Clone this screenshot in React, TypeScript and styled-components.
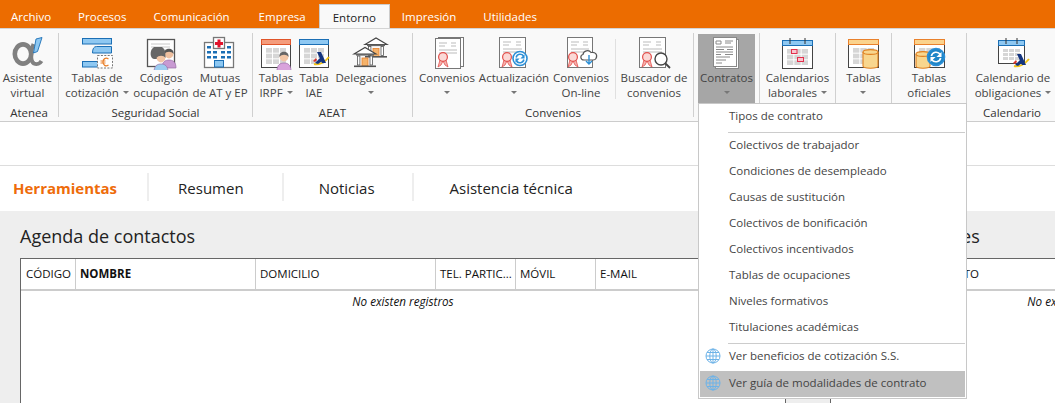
import { ReactNode } from 'react';
import styled, { createGlobalStyle } from 'styled-components';

const FONT = `"Open Sans", "Noto Sans", "Liberation Sans", sans-serif`;

const BLUE = '#1b6fb5';
const SKY = '#8ec8f2';
const ORANGE = '#e9812c';

/* svg pieces shared by the ribbon icons, canvas is 40x34 */
function Seal({ x, y }: { x: number; y: number }) {
  return (
    <g>
      <path d={`M${x - 3} ${y + 3}l-2 7 3-2 2-4 2 4 3 2-2-7z`} fill="#f6b4b0" stroke="#e2504c" strokeWidth="0.8" />
      <circle cx={x} cy={y} r="4.4" fill="#fbd9d6" stroke="#e2504c" strokeWidth="1.2" />
    </g>
  );
}

function Doc({ x, w = 26 }: { x: number; w?: number }) {
  return (
    <g>
      <rect x={x + 0.5} y="1.5" width={w} height="30" fill="#fff" stroke="#777" />
      <path
        d={`M${x + 4} 6h8M${x + 4} 9h6M${x + w - 9} 6h5M${x + w - 9} 9h5M${x + 4} 13h${w - 7}M${x + 4} 16h${w - 7}`}
        stroke="#bbb"
        fill="none"
      />
    </g>
  );
}

function Refresh({ x, y, r, dark }: { x: number; y: number; r: number; dark?: boolean }) {
  const c = dark ? '#1f86c8' : '#fff';
  const s = dark ? '#fff' : '#2c8fd6';
  return (
    <g>
      <circle cx={x} cy={y} r={r} fill={c} stroke="#2c8fd6" strokeWidth="1.6" />
      <path
        d={`M${x - r * 0.55} ${y - 1}a${r * 0.58} ${r * 0.58} 0 0 1 ${r * 1.05} -1.5M${x + r * 0.55} ${y + 1}a${r * 0.58} ${r * 0.58} 0 0 1 ${-r * 1.05} 1.5`}
        fill="none"
        stroke={s}
        strokeWidth="1.6"
      />
      <path
        d={`M${x + r * 0.65} ${y - r * 0.6}v${r * 0.6}h${-r * 0.6}zM${x - r * 0.65} ${y + r * 0.6}v${-r * 0.6}h${r * 0.6}z`}
        fill={s}
      />
    </g>
  );
}

function Table({ x, w, y = 3, h, top, edge, rings }: { x: number; w: number; y?: number; h: number; top: string; edge: string; rings?: boolean }) {
  const cells = [];
  for (let r = 0; r < 3; r++) {
    for (let c = 0; c < 3; c++) {
      cells.push(
        <rect
          key={`${r}-${c}`}
          x={x + 5 + (c * (w - 8)) / 3}
          y={y + 9 + (r * (h - 11)) / 3}
          width={(w - 8) / 3 - 1}
          height={(h - 11) / 3 - 1}
          fill="#d6d6d6"
        />
      );
    }
  }
  return (
    <g>
      <rect x={x + 0.5} y={y + 0.5} width={w} height={h} fill="#fff" stroke="#444" />
      <rect x={x + 0.5} y={y + 0.5} width={w} height="5" fill={top} stroke={edge} />
      {cells}
      {rings && <path d={`M${x + 8} ${y - 2}v6M${x + w - 7} ${y - 2}v6`} stroke="#333" />}
    </g>
  );
}

function Cylinder({ x, y, w, h }: { x: number; y: number; w: number; h: number }) {
  return (
    <g fill="#f8d68e" stroke="#e08020" strokeWidth="1.1">
      <path d={`M${x} ${y + 2}v${h - 4}c0 3 ${w} 3 ${w} 0v${-(h - 4)}`} />
      <ellipse cx={x + w / 2} cy={y + 2} rx={w / 2} ry="2.4" />
    </g>
  );
}

function Person({ x, y, skin, shirt, hair }: { x: number; y: number; skin: string; shirt: string; hair: string }) {
  return (
    <g>
      <path d={`M${x - 7} ${y + 14}c0-6 3-8 7-8s7 2 7 8z`} fill={shirt} stroke="#9a6fa8" strokeWidth="0.7" />
      <circle cx={x} cy={y} r="4.4" fill={skin} />
      <path d={`M${x - 4.6} ${y}c-1-7 10-7 9.2 0-2-3-7-3-9.2 0z`} fill={hair} />
    </g>
  );
}

function Aeat({ x, y }: { x: number; y: number }) {
  return (
    <g>
      <path d={`M${x - 7} ${y + 4}c5 1 11-2 15-7`} fill="none" stroke="#f2c417" strokeWidth="2" />
      <path d={`M${x - 4} ${y - 8}h4l5 11h-4zM${x - 6} ${y + 3}l5-5 2 3-4 3z`} fill="#14357f" />
      <path d={`M${x - 8} ${y + 1}l3 -3 1 2-2 2z`} fill="#d8342c" />
    </g>
  );
}

function Bank({ x, y }: { x: number; y: number }) {
  return (
    <g>
      <path d={`M${x} ${y + 7}l11-6.5 11 6.5z`} fill="#fff" stroke="#444" strokeWidth="1.1" />
      <rect x={x + 2} y={y + 7} width="18" height="1.6" fill="#666" />
      <rect x={x + 3.5} y={y + 9} width="2.4" height="9" fill="#fff" stroke="#555" strokeWidth="0.8" />
      <rect x={x + 16} y={y + 9} width="2.4" height="9" fill="#fff" stroke="#555" strokeWidth="0.8" />
      <rect x={x + 8} y={y + 11} width="6" height="8" fill="#f4b26a" stroke={ORANGE} strokeWidth="0.8" />
      <rect x={x} y={y + 18.5} width="22" height="1.6" fill="#555" />
    </g>
  );
}

const icons: Record<string, ReactNode> = {
  alpha: (
    <>
      <ellipse cx="15" cy="18" rx="8.2" ry="9.6" fill="none" stroke="#808080" strokeWidth="4.6" />
      <path d="M25.500 8c-3 7-3.500 17 .5 19.500 3 1.500 6 0 7.500-2.500" fill="none" stroke="#808080" strokeWidth="4" />
      <path d="M28 3l6-1.500-4.500 14-4 1.500z" fill={SKY} stroke={BLUE} strokeWidth="0.9" />
    </>
  ),
  cotiza: (
    <>
      <rect x="5.500" y="2.500" width="29" height="5.500" fill={SKY} stroke={BLUE} />
      <path d="M34.500 10.500h-15q-4 0-4 6.500h19z" fill={SKY} stroke={BLUE} />
      <rect x="5.500" y="25.500" width="18" height="5.500" fill={SKY} stroke={BLUE} />
      <rect x="20.500" y="19.500" width="15" height="12.500" fill="#fff" stroke="#777" strokeDasharray="2 1.4" />
      <path d="M31.500 23c-3-2-5.500 0-5.500 3s2.500 5 5.500 3M23.500 25h5M23.500 27h5" fill="none" stroke={ORANGE} strokeWidth="1.2" />
    </>
  ),
  codigos: (
    <>
      <rect x="6.500" y="3.500" width="27" height="27" fill="#fff" stroke="#555" strokeWidth="1.300" />
      <path d="M10 8h19M10 11h19M10 14h19M10 17h8" stroke="#c8c8c8" />
      <Person x={28} y={18} skin="#eebf9f" shirt="#c89ad2" hair="#555" />
      <path d="M13 23c-4 0-5-9 0-12h8c5 3 4 12 0 12z" fill="#666" />
      <Person x={20} y={22} skin="#f2c6a6" shirt="#9dcdf0" hair="#666" />
    </>
  ),
  mutuas: (
    <>
      <rect x="4.500" y="6.500" width="29" height="25" fill="#fff" stroke="#777" strokeWidth="1.300" />
      <rect x="13.500" y="1.500" width="11" height="11" fill="#fff" stroke="#777" strokeWidth="1.300" />
      <path d="M17.500 3.500h3v2.500h2.500v3h-2.500v2.500h-3v-2.500h-2.500v-3h2.500z" fill="#e2132b" />
      <path
        d="M7 10h4v2.500h-4zM27 10h4v2.500h-4zM7 15h4v2.500h-4zM13 15h4v2.500h-4zM21 15h4v2.500h-4zM27 15h4v2.500h-4zM7 20h4v2.500h-4zM13 20h4v2.500h-4zM21 20h4v2.500h-4zM27 20h4v2.500h-4z"
        fill={BLUE}
      />
      <rect x="14.500" y="24.500" width="9" height="6.500" fill={SKY} stroke={BLUE} />
    </>
  ),
  irpf: (
    <>
      <Table x={5} w={29} h={28} top="#f49c7c" edge="#e0552a" />
      <Person x={28} y={21} skin="#f2c6a6" shirt="#d9a3dc" hair="#666" />
    </>
  ),
  iae: (
    <>
      <Table x={5} w={29} h={28} top={SKY} edge={BLUE} />
      <Aeat x={27} y={24} />
    </>
  ),
  delegaciones: (
    <>
      <Bank x={14} y={1.500} />
      <Bank x={3} y={11} />
    </>
  ),
  convenios: (
    <>
      <rect x="11.500" y="1.500" width="25" height="29" fill="#fff" stroke="#777" />
      <g transform="translate(3 1)">
        <Doc x={5} w={25} />
      </g>
      <Seal x={16} y={21} />
    </>
  ),
  actualiza: (
    <>
      <Doc x={5} />
      <Seal x={13} y={21} />
      <Refresh x={26} y={22.500} r={7} />
    </>
  ),
  online: (
    <>
      <Doc x={6} w={25} />
      <Seal x={12} y={21} />
      <path
        d="M23 24c-4 0-4-5-1-5.500.5-4 6-5 8-2 4-1 7 2 5 6-.5 1-2 1.500-3 1.500z"
        fill="#fff"
        stroke="#555"
        strokeWidth="1.200"
      />
      <path d="M28 19v9M25 25l3 3 3-3" fill="none" stroke="#2c8fd6" strokeWidth="1.400" />
    </>
  ),
  buscador: (
    <>
      <Doc x={5} />
      <Seal x={13} y={21} />
      <circle cx="27" cy="23" r="6" fill="#fff" stroke="#444" strokeWidth="1.400" />
      <path d="M31.500 27.500l4.500 4.500" stroke="#444" strokeWidth="1.800" />
    </>
  ),
  contratos: (
    <>
      <rect x="8.500" y="3.500" width="23" height="29" fill="#fff" stroke="#888" />
      <rect x="6.500" y="1.500" width="23" height="29" fill="#fff" stroke="#888" />
      <path
        d="M9 5h5v3h-5zM18 5h8M18 7h6M9 11h17M9 13.500h8M20 13.500h6M9 16h17M9 18.500h5M18 18.500h8M9 21h14M9 24h10M9 27h6"
        stroke="#8a8a8a"
        fill="none"
      />
    </>
  ),
  calendarios: (
    <>
      <Table x={4} w={30} y={4} h={28} top={SKY} edge={BLUE} rings />
      <rect x="13.500" y="13.500" width="5.500" height="4" fill="#f8c6d0" stroke="#e2304c" />
      <rect x="19.500" y="21.500" width="6" height="4" fill="#f8c6d0" stroke="#e2304c" />
    </>
  ),
  tablas: (
    <>
      <Table x={4} w={30} h={28} top="#fbd38d" edge={ORANGE} />
      <Cylinder x={19} y={14} w={15} h={18} />
    </>
  ),
  oficiales: (
    <>
      <Table x={5} w={30} h={28} top="#fbd38d" edge={ORANGE} />
      <Cylinder x={7} y={16} w={14} h={16} />
      <Refresh x={27} y={21} r={8.500} dark />
    </>
  ),
  obligaciones: (
    <>
      <Table x={5} w={26} y={4} h={23} top={SKY} edge={BLUE} rings />
      <Aeat x={28} y={26} />
    </>
  ),
};

const GlobalStyle = createGlobalStyle`
  html, body {
    margin: 0;
    background: #fff;
    overflow: hidden;
  }
  body {
    font-family: ${FONT};
  }
`;

const Page = styled.div`
  width: 1055px;
  height: 403px;
  overflow: hidden;
  background: #fff;
`;

const TopBar = styled.div`
  height: 28px;
  background: #ec6c00;
  display: flex;
  align-items: flex-end;
`;

const TopTab = styled.div<{ $active?: boolean; $gap?: number }>`
  height: ${(p) => (p.$active ? 24 : 28)}px;
  line-height: ${(p) => (p.$active ? 25 : 33)}px;
  padding: 0 ${(p) => (p.$active ? 13 : 14)}px;
  margin-left: ${(p) => p.$gap ?? 0}px;
  font-size: 11.5px;
  color: ${(p) => (p.$active ? '#222' : '#fff')};
  background: ${(p) => (p.$active ? '#f9f9f9' : 'transparent')};
  border: ${(p) => (p.$active ? '1px solid #ccc' : 'none')};
  border-bottom: none;
  box-sizing: border-box;
`;

const Ribbon = styled.div`
  height: 94px;
  box-sizing: border-box;
  background: #f9f9f9;
  border-top: 1px solid #d4d4d4;
  border-bottom: 1px solid #ccc;
  display: flex;
  align-items: flex-start;
  padding-top: 4px;
`;

const Group = styled.div<{ $width: number; $bare?: boolean; $inset?: number }>`
  width: ${(p) => p.$width}px;
  height: 84px;
  box-sizing: border-box;
  border-right: ${(p) => (p.$bare ? 'none' : '1px solid #d0d0d0')};
  padding-left: ${(p) => p.$inset ?? 0}px;
  flex: none;
`;

const GroupRow = styled.div`
  display: flex;
  height: 72px;
`;

const GroupLabel = styled.div`
  font-size: 11.5px;
  line-height: 16px;
  text-align: center;
  color: #333;
`;

const RibbonButton = styled.div<{ $width: number; $open?: boolean }>`
  position: relative;
  width: ${(p) => p.$width}px;
  height: 69px;
  margin-top: 1px;
  flex: none;
  display: flex;
  flex-direction: column;
  align-items: center;
  background: ${(p) => (p.$open ? '#a6a6a6' : 'transparent')};
  color: #444;
`;

const IconBox = styled.svg`
  display: block;
  flex: none;
  margin-top: 2px;
`;

const ButtonText = styled.div`
  font-size: 11.5px;
  line-height: 15px;
  text-align: center;
  white-space: nowrap;
  display: flex;
  flex-direction: column;
  align-items: center;
`;

const Line = styled.span`
  display: flex;
  align-items: center;
  height: 15px;
`;

const Caret = styled.i<{ $inline?: boolean }>`
  display: inline-block;
  width: 0;
  height: 0;
  margin-left: ${(p) => (p.$inline ? 4 : 0)}px;
  border-left: 3px solid transparent;
  border-right: 3px solid transparent;
  border-top: 3px solid #777;
`;

const InnerSep = styled.div`
  width: 1px;
  height: 60px;
  margin-top: 6px;
  background: #e0e0e0;
  flex: none;
`;

const Menu = styled.div`
  position: absolute;
  left: 0;
  top: 100%;
  z-index: 10;
  width: 269px;
  height: 296px;
  box-sizing: border-box;
  background: #fff;
  border: 1px solid #c8c8c8;
  color: #444;
`;

const MenuItem = styled.div<{ $active?: boolean }>`
  display: flex;
  align-items: center;
  height: 26px;
  box-sizing: border-box;
  padding: 0 0 ${(p) => (p.$active ? 4 : 3)}px 29px;
  margin: ${(p) => (p.$active ? 1 : 0)}px 1px 0;
  font-size: 11.5px;
  white-space: nowrap;
  position: relative;
  background: ${(p) => (p.$active ? '#c0c0c0' : 'transparent')};
`;

const MenuSep = styled.div`
  height: 1px;
  margin: 2px 1px 0 29px;
  background: #ccc;
`;

const GlobeIcon = styled.svg`
  position: absolute;
  left: 5px;
  top: 4px;
`;

const Blank = styled.div`
  height: 43px;
  border-bottom: 1px solid #ddd;
`;

const SectionTabs = styled.div`
  height: 45px;
  box-sizing: border-box;
  padding-top: 7px;
  display: flex;
  align-items: flex-start;
  background: #fff;
`;

const SectionTab = styled.div<{ $active?: boolean; $left: number; $right: number; $last?: boolean }>`
  height: 28px;
  line-height: 31px;
  padding: 0 ${(p) => p.$right}px 0 ${(p) => p.$left}px;
  border-right: ${(p) => (p.$last ? 'none' : '2px solid #eee')};
  font-size: 15px;
  font-weight: ${(p) => (p.$active ? 700 : 400)};
  color: ${(p) => (p.$active ? '#ee6c0a' : '#222')};
  white-space: nowrap;
`;

const Content = styled.div`
  height: 192px;
  background: #eee;
  display: grid;
  grid-template-columns: 766px 496px;
  column-gap: 44px;
  padding-left: 20px;
`;

const Panel = styled.div`
  min-width: 0;
`;

const PanelTitle = styled.h2<{ $indent?: number }>`
  margin: 0;
  height: 47px;
  padding-left: ${(p) => p.$indent ?? 0}px;
  font-size: 18px;
  font-weight: 400;
  line-height: 50px;
  color: #222;
  white-space: nowrap;
`;

const Grid = styled.div`
  height: 145px;
  background: #fff;
  box-sizing: border-box;
  border: 1px solid #666;
  border-bottom: none;
`;

const GridHead = styled.div`
  display: flex;
  height: 30px;
  border-bottom: 2px solid #ccc;
`;

const HeadCell = styled.div<{ $width?: number; $bold?: boolean; $pad?: number }>`
  width: ${(p) => (p.$width ? `${p.$width}px` : 'auto')};
  flex: ${(p) => (p.$width ? 'none' : 1)};
  box-sizing: border-box;
  padding-left: ${(p) => p.$pad ?? 4}px;
  font-size: 11.5px;
  line-height: 30px;
  color: #111;
  font-weight: ${(p) => (p.$bold ? 700 : 400)};
  border-right: ${(p) => (p.$width ? '1px solid #ccc' : 'none')};
  white-space: nowrap;
`;

const EmptyRow = styled.div`
  font-size: 11.7px;
  font-style: italic;
  line-height: 20px;
  text-align: center;
  color: #111;
`;

type BtnProps = {
  icon: string;
  width: number;
  lines: string[];
  caret?: 'inline' | 'below';
  open?: boolean;
  children?: ReactNode;
};

function Btn({ icon, width, lines, caret, open, children }: BtnProps) {
  return (
    <RibbonButton $width={width} $open={open}>
      <IconBox width="40" height="34" viewBox="0 0 40 34">
        {icons[icon]}
      </IconBox>
      <ButtonText>
        {lines.map((l, i) => (
          <Line key={l}>
            {l}
            {caret === 'inline' && i === lines.length - 1 && <Caret $inline />}
          </Line>
        ))}
        {caret === 'below' && (
          <Line>
            <Caret />
          </Line>
        )}
      </ButtonText>
      {children}
    </RibbonButton>
  );
}

function Globe() {
  return (
    <GlobeIcon width="16" height="16" viewBox="0 0 16 16" fill="none" stroke="#6db3e8" strokeWidth="1">
      <circle cx="8" cy="8" r="7" />
      <ellipse cx="8" cy="8" rx="3.200" ry="7" />
      <path d="M1 8h14M2 4.500h12M2 11.500h12M8 1v14" />
    </GlobeIcon>
  );
}

const menuTop = ['Colectivos de trabajador', 'Condiciones de desempleado', 'Causas de sustitución', 'Colectivos de bonificación', 'Colectivos incentivados', 'Tablas de ocupaciones', 'Niveles formativos', 'Titulaciones académicas'];

function App() {
  return (
    <Page>
      <GlobalStyle />
      <TopBar>
        <TopTab $gap={-3}>Archivo</TopTab>
        <TopTab $gap={-1}>Procesos</TopTab>
        <TopTab $gap={-1}>Comunicación</TopTab>
        <TopTab $gap={1}>Empresa</TopTab>
        <TopTab $gap={-1} $active>Entorno</TopTab>
        <TopTab $gap={-2}>Impresión</TopTab>
        <TopTab $gap={-1}>Utilidades</TopTab>
      </TopBar>
      <Ribbon>
        <Group $width={59}>
          <GroupRow>
            <Btn icon="alpha" width={55} lines={['Asistente', 'virtual']} />
          </GroupRow>
          <GroupLabel>Atenea</GroupLabel>
        </Group>
        <Group $width={194}>
          <GroupRow>
            <Btn icon="cotiza" width={76} lines={['Tablas de', 'cotización']} caret="inline" />
            <Btn icon="codigos" width={52} lines={['Códigos', 'ocupación']} />
            <Btn icon="mutuas" width={66} lines={['Mutuas', 'de AT y EP']} />
          </GroupRow>
          <GroupLabel>Seguridad Social</GroupLabel>
        </Group>
        <Group $width={160}>
          <GroupRow>
            <Btn icon="irpf" width={46} lines={['Tablas', 'IRPF']} caret="inline" />
            <Btn icon="iae" width={30} lines={['Tabla', 'IAE']} />
            <Btn icon="delegaciones" width={84} lines={['Delegaciones']} caret="below" />
          </GroupRow>
          <GroupLabel>AEAT</GroupLabel>
        </Group>
        <Group $width={281}>
          <GroupRow>
            <Btn icon="convenios" width={68} lines={['Convenios']} caret="below" />
            <Btn icon="actualiza" width={66} lines={['Actualización']} caret="below" />
            <Btn icon="online" width={68} lines={['Convenios', 'On-line']} />
            <InnerSep />
            <Btn icon="buscador" width={76} lines={['Buscador de', 'convenios']} />
          </GroupRow>
          <GroupLabel>Convenios</GroupLabel>
        </Group>
        <Group $width={66} $inset={4}>
          <GroupRow>
            <Btn icon="contratos" width={57} lines={['Contratos']} caret="below" open>
              <Menu>
                <MenuItem>Tipos de contrato</MenuItem>
                <MenuSep />
                {menuTop.map((m) => (
                  <MenuItem key={m}>{m}</MenuItem>
                ))}
                <MenuSep />
                <MenuItem>
                  <Globe />
                  Ver beneficios de cotización S.S.
                </MenuItem>
                <MenuItem $active>
                  <Globe />
                  Ver guía de modalidades de contrato
                </MenuItem>
              </Menu>
            </Btn>
          </GroupRow>
        </Group>
        <Group $width={76}>
          <GroupRow>
            <Btn icon="calendarios" width={75} lines={['Calendarios', 'laborales']} caret="inline" />
          </GroupRow>
        </Group>
        <Group $width={56}>
          <GroupRow>
            <Btn icon="tablas" width={55} lines={['Tablas']} caret="below" />
          </GroupRow>
        </Group>
        <Group $width={75}>
          <GroupRow>
            <Btn icon="oficiales" width={74} lines={['Tablas', 'oficiales']} />
          </GroupRow>
        </Group>
        <Group $width={88} $bare $inset={2}>
          <GroupRow>
            <Btn icon="obligaciones" width={88} lines={['Calendario de', 'obligaciones']} caret="inline" />
          </GroupRow>
          <GroupLabel>Calendario</GroupLabel>
        </Group>
      </Ribbon>
      <Blank />
      <SectionTabs>
        <SectionTab $active $left={13} $right={30}>Herramientas</SectionTab>
        <SectionTab $left={29} $right={38}>Resumen</SectionTab>
        <SectionTab $left={35} $right={37}>Noticias</SectionTab>
        <SectionTab $left={36} $right={0} $last>Asistencia técnica</SectionTab>
      </SectionTabs>
      <Content>
        <Panel>
          <PanelTitle>Agenda de contactos</PanelTitle>
          <Grid>
            <GridHead>
              <HeadCell $width={55} $pad={5}>CÓDIGO</HeadCell>
              <HeadCell $width={180} $bold>NOMBRE</HeadCell>
              <HeadCell $width={180}>DOMICILIO</HeadCell>
              <HeadCell $width={80}>TEL. PARTIC...</HeadCell>
              <HeadCell $width={80}>MÓVIL</HeadCell>
              <HeadCell>E-MAIL</HeadCell>
            </GridHead>
            <EmptyRow>No existen registros</EmptyRow>
          </Grid>
        </Panel>
        <Panel>
          <PanelTitle $indent={12}>Comunicaciones</PanelTitle>
          <Grid>
            <GridHead>
              <HeadCell $width={83}>CÓDIGO</HeadCell>
              <HeadCell>CONTACTO</HeadCell>
            </GridHead>
            <EmptyRow>No existen registros</EmptyRow>
          </Grid>
        </Panel>
      </Content>
    </Page>
  );
}

export default App;
